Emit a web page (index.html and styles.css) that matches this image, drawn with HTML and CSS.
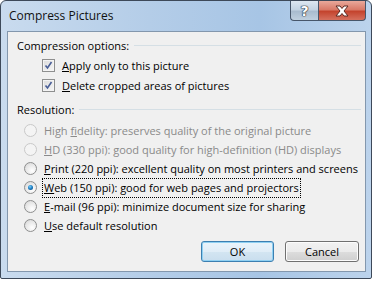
FILE: index.html
```html
<!DOCTYPE html>
<html lang="en">
<head>
    <meta charset="UTF-8">
    <title>Compress Pictures</title>
    <link rel="stylesheet" href="styles.css">
</head>
<body>
    <div class="window">
        <div class="titlebar">
            <span class="caption">Compress Pictures</span>
            <div class="caption-buttons">
                <span class="cap-btn help">?</span>
                <span class="cap-btn close">
                    <svg width="16" height="12" viewBox="0 0 16 12">
                        <path d="M2 1 L6 1 L8 3.5 L10 1 L14 1 L10 6 L14 11 L10 11 L8 8.5 L6 11 L2 11 L6 6 Z" fill="#fff" stroke="#5b2a22" stroke-width="1" stroke-linejoin="round"/>
                    </svg>
                </span>
            </div>
        </div>

        <div class="client">
            <div class="group-head">
                <span>Compression options:</span>
                <span class="rule"></span>
            </div>
            <div class="check-row">
                <span class="checkbox">
                    <svg width="11" height="11" viewBox="0 0 11 11"><path d="M2.5 5.5 L4.5 8 L8.5 2" fill="none" stroke="#4a5f97" stroke-width="1.6"/></svg>
                </span>
                <span><u>A</u>pply only to this picture</span>
            </div>
            <div class="check-row">
                <span class="checkbox">
                    <svg width="11" height="11" viewBox="0 0 11 11"><path d="M2.5 5.5 L4.5 8 L8.5 2" fill="none" stroke="#4a5f97" stroke-width="1.6"/></svg>
                </span>
                <span><u>D</u>elete cropped areas of pictures</span>
            </div>

            <div class="group-head res">
                <span>Resolution:</span>
                <span class="rule"></span>
            </div>
            <div class="radios">
                <div class="radio-row disabled">
                    <span class="radio"></span>
                    <span class="label">High <u>f</u>idelity: preserves quality of the original picture</span>
                </div>
                <div class="radio-row disabled">
                    <span class="radio"></span>
                    <span class="label"><u>H</u>D (330 ppi): good quality for high-definition (HD) displays</span>
                </div>
                <div class="radio-row">
                    <span class="radio"></span>
                    <span class="label"><u>P</u>rint (220 ppi): excellent quality on most printers and screens</span>
                </div>
                <div class="radio-row">
                    <span class="radio selected"></span>
                    <span class="label focus"><u>W</u>eb (150 ppi): good for web pages and projectors</span>
                </div>
                <div class="radio-row">
                    <span class="radio"></span>
                    <span class="label"><u>E</u>-mail (96 ppi): minimize document size for sharing</span>
                </div>
                <div class="radio-row">
                    <span class="radio"></span>
                    <span class="label"><u>U</u>se default resolution</span>
                </div>
            </div>

            <div class="actions">
                <button class="btn default">OK</button>
                <button class="btn">Cancel</button>
            </div>
        </div>
    </div>
</body>
</html>
```

FILE: styles.css
```css
* {
    margin: 0;
    padding: 0;
    box-sizing: border-box;
}

body {
    font-family: 'Open Sans', 'Noto Sans', sans-serif;
    font-size: 11px;
    background: #ffffff;
    color: #000;
}

.window {
    width: 372px;
    height: 279px;
    border: 1px solid #3d4959;
    border-radius: 6px 6px 2px 2px;
    background: linear-gradient(to right, #c9dbee 0%, #b4cde8 40%, #a7c5e5 70%, #bcd3ec 100%);
    display: flex;
    flex-direction: column;
    padding: 0 5px 6px 6px;
}

.titlebar {
    height: 30px;
    display: flex;
    align-items: flex-start;
}

.caption {
    font-size: 12px;
    padding-left: 2px;
    padding-top: 6px;
    color: #111;
}

.caption-buttons {
    margin-left: auto;
    display: flex;
}

.cap-btn {
    height: 20px;
    display: flex;
    align-items: center;
    justify-content: center;
    border: 1px solid #47566a;
    border-top: none;
}

.help {
    width: 28px;
    border-radius: 0 0 0 4px;
    border-right: none;
    background: linear-gradient(#dde7f1 0%, #c4d4e3 45%, #a9bccf 55%, #bfd0df 100%);
    color: #fff;
    font-family: 'DejaVu Sans', sans-serif;
    font-weight: bold;
    font-size: 14px;
    line-height: 1;
    text-shadow: 0 0 1px #2d3640, 0 0 1px #2d3640, 0 0 1px #2d3640, 0 0 1px #2d3640;
}

.close {
    width: 48px;
    border-radius: 0 0 4px 0;
    background: linear-gradient(#e9a99b 0%, #d97a68 45%, #c4442e 55%, #d5705e 100%);
}

.client {
    flex: 1;
    background: #f0f0f0;
    border: 1px solid #8397ad;
}

.group-head {
    display: flex;
    align-items: center;
    height: 20px;
    margin-top: 3px;
    padding-left: 9px;
    padding-right: 4px;
}

.group-head.res {
    margin-top: 4px;
}

.rule {
    flex: 1;
    height: 1px;
    background: #d5dfe5;
    margin-left: 5px;
}

.check-row {
    display: flex;
    align-items: center;
    height: 20px;
    padding-left: 34px;
}

.checkbox {
    width: 13px;
    height: 13px;
    border: 1px solid #8e8f8f;
    background: linear-gradient(135deg, #dcdcdc, #f6f6f6);
    box-shadow: inset 0 0 0 1px #f4f4f4;
    margin-right: 7px;
    display: flex;
    align-items: center;
    justify-content: center;
}

.radios {
    margin-top: 2px;
}

.radio-row {
    display: flex;
    align-items: center;
    height: 19px;
    padding-left: 16px;
}

.radio {
    width: 13px;
    height: 13px;
    border-radius: 50%;
    border: 1px solid #8e8f8f;
    background: radial-gradient(circle at 65% 70%, #ffffff 0%, #e6e6e6 60%, #d0d0d0 100%);
    margin-right: 6px;
    display: flex;
    align-items: center;
    justify-content: center;
}

.radio.selected::after {
    content: '';
    width: 5px;
    height: 5px;
    border-radius: 50%;
    background: radial-gradient(circle at 40% 35%, #7ad0fb 0%, #1b7bc0 50%, #0a3f73 100%);
}

.radio-row.disabled .radio {
    border-color: #c9c9c9;
    background: #f4f4f4;
}

.radio-row.disabled .label {
    color: #8a8a8a;
}

.label {
    padding: 0 1px;
    line-height: 18px;
}

.label.focus {
    outline: 1px dotted #000;
}

.actions {
    display: flex;
    justify-content: flex-end;
    gap: 11px;
    margin-top: 6px;
    padding-right: 6px;
}

.btn {
    font-family: inherit;
    font-size: 11px;
    width: 74px;
    height: 21px;
    border: 1px solid #707070;
    border-radius: 3px;
    background: linear-gradient(#f2f2f2 0%, #ebebeb 50%, #dddddd 51%, #cfcfcf 100%);
    box-shadow: inset 0 0 0 1px #fcfcfc;
    color: #000;
}

.btn.default {
    width: 73px;
    border-color: #3c7fb1;
    box-shadow: inset 0 0 0 1px #8fd0f2;
    background: linear-gradient(#eaf4fb 0%, #e0edf7 50%, #d3e5f2 51%, #c9deee 100%);
}
```
